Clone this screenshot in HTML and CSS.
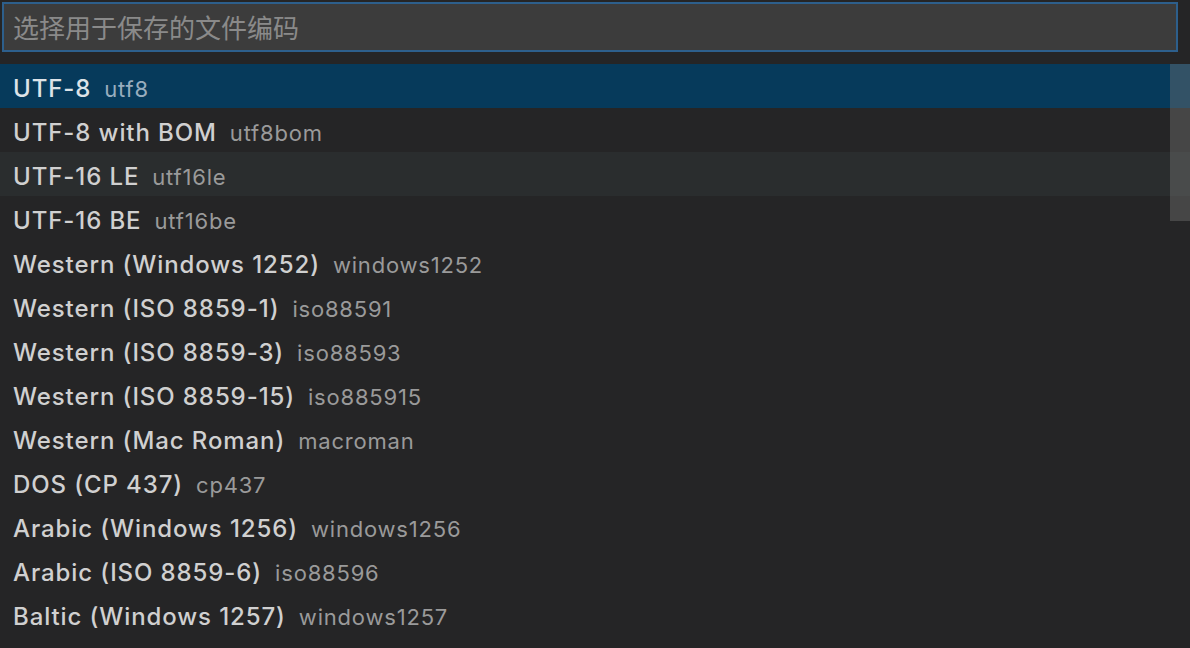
FILE: index.html
```html
<!DOCTYPE html>
<html lang="zh">
<head>
<meta charset="utf-8">
<title>Encoding</title>
<link rel="stylesheet" href="styles.css">
</head>
<body>
<div class="quick">
  <div class="input-wrap">
    <input class="input" type="text" placeholder="选择用于保存的文件编码">
  </div>
  <div class="list-area">
    <ul class="list">
      <li class="row selected"><span class="label">UTF-8</span><span class="desc">utf8</span></li>
      <li class="row"><span class="label">UTF-8 with BOM</span><span class="desc">utf8bom</span></li>
      <li class="row hover"><span class="label">UTF-16 LE</span><span class="desc">utf16le</span></li>
      <li class="row"><span class="label">UTF-16 BE</span><span class="desc">utf16be</span></li>
      <li class="row"><span class="label">Western (Windows 1252)</span><span class="desc">windows1252</span></li>
      <li class="row"><span class="label">Western (ISO 8859-1)</span><span class="desc">iso88591</span></li>
      <li class="row"><span class="label">Western (ISO 8859-3)</span><span class="desc">iso88593</span></li>
      <li class="row"><span class="label">Western (ISO 8859-15)</span><span class="desc">iso885915</span></li>
      <li class="row"><span class="label">Western (Mac Roman)</span><span class="desc">macroman</span></li>
      <li class="row"><span class="label">DOS (CP 437)</span><span class="desc">cp437</span></li>
      <li class="row"><span class="label">Arabic (Windows 1256)</span><span class="desc">windows1256</span></li>
      <li class="row"><span class="label">Arabic (ISO 8859-6)</span><span class="desc">iso88596</span></li>
      <li class="row"><span class="label">Baltic (Windows 1257)</span><span class="desc">windows1257</span></li>
    </ul>
    <div class="scrollbar"></div>
  </div>
</div>
</body>
</html>
```

FILE: styles.css
```css
html, body {
  margin: 0;
  padding: 0;
  background: #252526;
  width: 1190px;
  height: 648px;
  overflow: hidden;
}

.quick {
  font-family: Inter, "Noto Sans CJK SC", sans-serif;
  color: #cccccc;
}

.input-wrap {
  padding: 2px 12px 0 2px;
  height: 64px;
  box-sizing: border-box;
}

.input {
  display: block;
  width: 100%;
  height: 50px;
  box-sizing: border-box;
  margin: 0;
  border: 2px solid #2d5f8c;
  background: #3c3c3c;
  color: #cccccc;
  font-family: "Noto Sans CJK SC", sans-serif;
  font-size: 26px;
  padding: 0 0 2px 9px;
  outline: none;
}

.input::placeholder {
  color: #8a8a8a;
}

.list-area {
  position: relative;
}

.list {
  list-style: none;
  margin: 0;
  padding: 0;
}

.row {
  height: 44px;
  display: flex;
  align-items: center;
  padding-left: 13px;
  white-space: nowrap;
}

.row.selected {
  background: #063a5b;
}

.row.hover {
  background: #2a2d2e;
}

.label {
  font-size: 24px;
  font-weight: 500;
  color: #d0d0d0;
  letter-spacing: 0.9px;
  padding-top: 4px;
}

.desc {
  font-size: 22px;
  color: #9a9a9a;
  margin-left: 13px;
  letter-spacing: 0.8px;
  padding-top: 6px;
}

.row.selected .label {
  color: #dde3e8;
}

.row.selected .desc {
  color: #98adbe;
}

.scrollbar {
  position: absolute;
  top: 0;
  right: 0;
  width: 20px;
  height: 157px;
  background: rgba(121, 121, 121, 0.4);
}
```
